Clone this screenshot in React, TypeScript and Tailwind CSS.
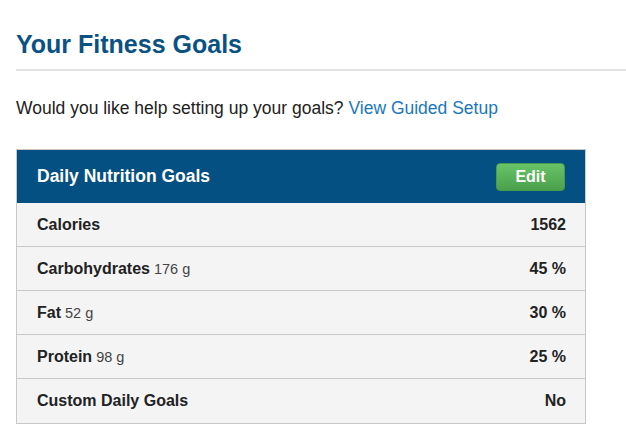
const ROWS: { label: string; sub?: string; value: string }[] = [
  { label: 'Calories', value: '1562' },
  { label: 'Carbohydrates', sub: '176 g', value: '45 %' },
  { label: 'Fat', sub: '52 g', value: '30 %' },
  { label: 'Protein', sub: '98 g', value: '25 %' },
  { label: 'Custom Daily Goals', value: 'No' },
];

export default function App() {
  return (
    <div className="min-h-[435px] bg-white pl-4 pt-[28px] font-['Liberation_Sans',Arial,sans-serif]">
      {/* Heading */}
      <h2 className="border-b-2 border-[#e3e3e3] pb-[9px] text-[25px] font-bold leading-[32px] text-[#0b5283]">
        Your Fitness Goals
      </h2>

      <p className="mt-[25px] text-[17.5px] leading-[24px] text-[#222]">
        Would you like help setting up your goals?{' '}
        <a href="#" className="text-[#1a77bd]">
          View Guided Setup
        </a>
      </p>

      {/* Goals table */}
      <div className="mt-[29px] w-[570px] border border-[#c8c8c8]">
        <div className="flex h-[53px] items-center justify-between bg-[#045082] pl-5 pr-5">
          <h3 className="text-[17.5px] font-bold text-white">Daily Nutrition Goals</h3>
          <button className="h-[28px] w-[69px] rounded-[4px] border border-[#4a9a4c] bg-gradient-to-b from-[#68c468] to-[#4b9f4c] text-[16px] font-bold text-white">
            Edit
          </button>
        </div>
        {ROWS.map((r, i) => (
          <div
            key={r.label}
            className={`flex h-[44px] items-center justify-between bg-[#f4f4f4] pl-5 pr-[19px] text-[#222] ${
              i < ROWS.length - 1 ? 'border-b border-[#c8c8c8]' : ''
            }`}
          >
            <span className="text-[16px] font-bold">
              {r.label}
              {r.sub && <span className="text-[14.5px] font-normal text-[#444]"> {r.sub}</span>}
            </span>
            <span className="text-[16px] font-bold">{r.value}</span>
          </div>
        ))}
      </div>
    </div>
  );
}
